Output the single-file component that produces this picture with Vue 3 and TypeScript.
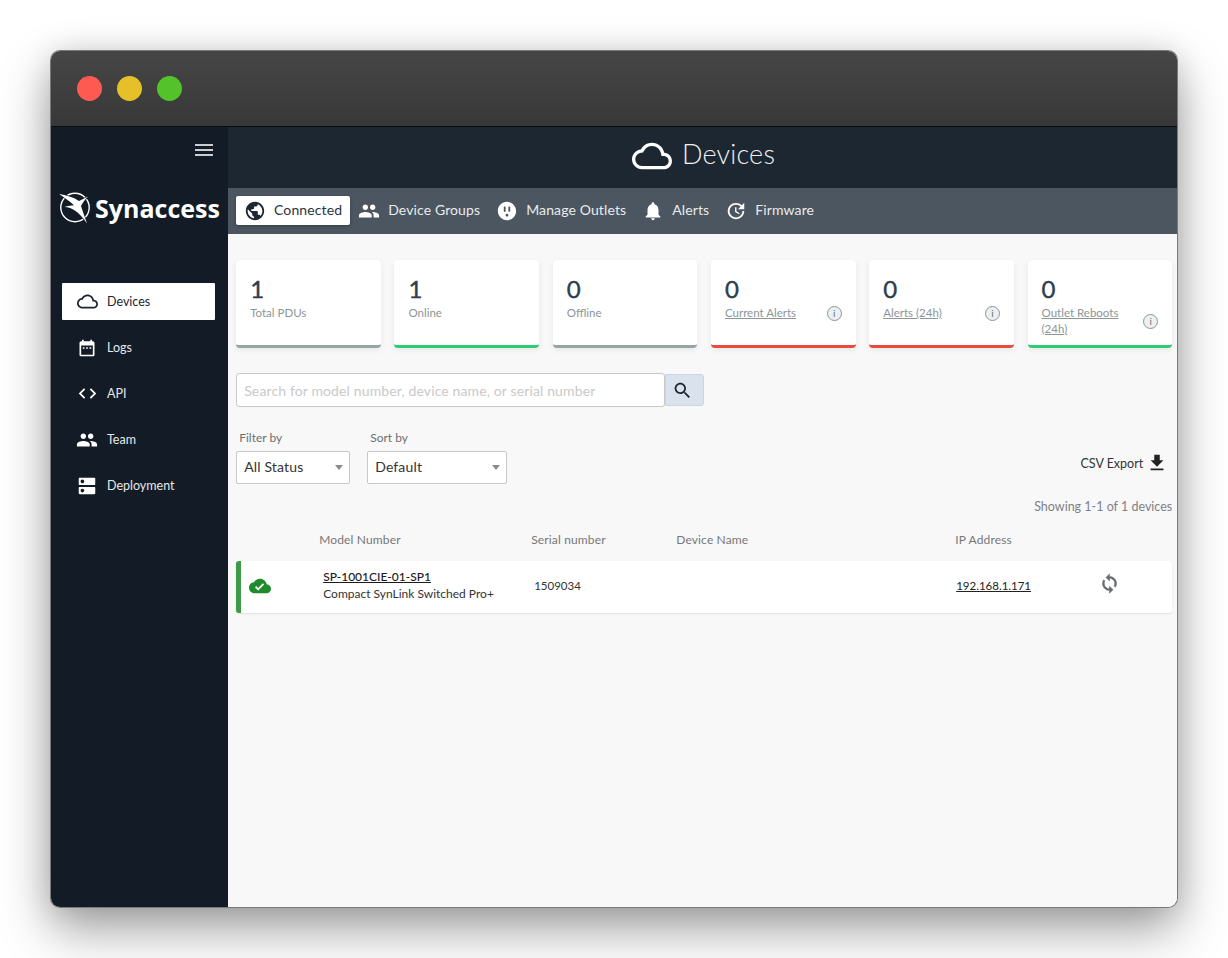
<script setup lang="ts">
interface Stat {
  value: number
  label: string
  tone: string
  link?: boolean
  info?: boolean
}

const icons = {
  menu: 'M3 18h18v-2H3v2zm0-5h18v-2H3v2zm0-7v2h18V6H3z',
  cloud: 'M19.35 10.04C18.67 6.59 15.64 4 12 4 9.11 4 6.6 5.64 5.35 8.04 2.34 8.36 0 10.91 0 14c0 3.31 2.69 6 6 6h13c2.76 0 5-2.24 5-5 0-2.64-2.05-4.78-4.65-4.96zM19 18H6c-2.21 0-4-1.79-4-4 0-2.05 1.53-3.76 3.56-3.97l1.07-.11.5-.95C8.08 7.14 9.94 6 12 6c2.62 0 4.88 1.86 5.39 4.43l.3 1.5 1.53.11c1.56.1 2.78 1.41 2.78 2.96 0 1.65-1.35 3-3 3z',
  calendar: 'M19 4h-1V2h-2v2H8V2H6v2H5c-1.1 0-2 .9-2 2v14c0 1.1.9 2 2 2h14c1.1 0 2-.9 2-2V6c0-1.1-.9-2-2-2zm0 16H5V9h14v11zM7 11h2v2H7v-2zm4 0h2v2h-2v-2zm4 0h2v2h-2v-2z',
  code: 'M9.4 16.6L4.8 12l4.6-4.6L8 6l-6 6 6 6 1.4-1.4zm5.2 0l4.6-4.6-4.6-4.6L16 6l6 6-6 6-1.4-1.4z',
  people: 'M16 11c1.66 0 2.99-1.34 2.99-3S17.66 5 16 5c-1.66 0-3 1.34-3 3s1.34 3 3 3zm-8 0c1.66 0 2.99-1.34 2.99-3S9.66 5 8 5C6.34 5 5 6.34 5 8s1.34 3 3 3zm0 2c-2.33 0-7 1.17-7 3.5V19h14v-2.5c0-2.33-4.67-3.5-7-3.5zm8 0c-.29 0-.62.02-.97.05 1.16.84 1.97 1.97 1.97 3.45V19h6v-2.5c0-2.33-4.67-3.5-7-3.5z',
  dns: 'M20 13H4c-.55 0-1 .45-1 1v6c0 .55.45 1 1 1h16c.55 0 1-.45 1-1v-6c0-.55-.45-1-1-1zM7 19c-1.1 0-2-.9-2-2s.9-2 2-2 2 .9 2 2-.9 2-2 2zM20 3H4c-.55 0-1 .45-1 1v6c0 .55.45 1 1 1h16c.55 0 1-.45 1-1V4c0-.55-.45-1-1-1zM7 9c-1.1 0-2-.9-2-2s.9-2 2-2 2 .9 2 2-.9 2-2 2z',
  globe: 'M12 2C6.48 2 2 6.48 2 12s4.48 10 10 10 10-4.48 10-10S17.52 2 12 2zm-1 17.93c-3.95-.49-7-3.85-7-7.93 0-.62.08-1.21.21-1.79L9 15v1c0 1.1.9 2 2 2v1.93zm6.9-2.54c-.26-.81-1-1.39-1.9-1.39h-1v-3c0-.55-.45-1-1-1H8v-2h2c.55 0 1-.45 1-1V7h2c1.1 0 2-.9 2-2v-.41c2.93 1.19 5 4.06 5 7.41 0 2.08-.8 3.97-2.1 5.39z',
  outlet: 'M12 2C6.48 2 2 6.48 2 12s4.48 10 10 10 10-4.48 10-10S17.52 2 12 2zM9.5 13c-.55 0-1-.45-1-1V8c0-.55.45-1 1-1s1 .45 1 1v4c0 .55-.45 1-1 1zm2.5 5c-.83 0-1.5-.67-1.5-1.5S11.17 15 12 15s1.5.67 1.5 1.5S12.83 18 12 18zm3.5-6c0 .55-.45 1-1 1s-1-.45-1-1V8c0-.55.45-1 1-1s1 .45 1 1v4z',
  bell: 'M12 22c1.1 0 2-.9 2-2h-4c0 1.1.89 2 2 2zm6-6v-5c0-3.07-1.64-5.64-4.5-6.32V4c0-.83-.67-1.5-1.5-1.5s-1.5.67-1.5 1.5v.68C7.63 5.36 6 7.92 6 11v5l-2 2v1h16v-1l-2-2z',
  update: 'M21 10.12h-6.78l2.74-2.82c-2.73-2.7-7.15-2.8-9.88-.1-2.73 2.71-2.73 7.08 0 9.79s7.15 2.71 9.88 0C18.32 15.65 19 14.08 19 12.1h2c0 1.98-.88 4.55-2.64 6.29-3.51 3.48-9.21 3.48-12.72 0-3.5-3.47-3.53-9.11-.02-12.58s9.14-3.47 12.65 0L21 3v7.12zM12.5 8v4.25l3.5 2.08-.72 1.21L11 13V8h1.5z',
  search: 'M15.5 14h-.79l-.28-.27C15.41 12.59 16 11.11 16 9.5 16 5.91 13.09 3 9.5 3S3 5.91 3 9.5 5.91 16 9.5 16c1.61 0 3.09-.59 4.23-1.57l.27.28v.79l5 4.99L20.49 19l-4.99-5zm-6 0C7.01 14 5 11.99 5 9.5S7.01 5 9.5 5 14 7.01 14 9.5 11.99 14 9.5 14z',
  download: 'M19 9h-4V3H9v6H5l7 7 7-7zM5 18v2h14v-2H5z',
  done: 'M19.35 10.04C18.67 6.59 15.64 4 12 4 9.11 4 6.6 5.64 5.35 8.04 2.34 8.36 0 10.91 0 14c0 3.31 2.69 6 6 6h13c2.76 0 5-2.24 5-5 0-2.64-2.05-4.78-4.65-4.96zM10 17l-3.5-3.5 1.41-1.41L10 14.17 15.18 9l1.41 1.41L10 17z',
  sync: 'M12 4V1L8 5l4 4V6c3.31 0 6 2.69 6 6 0 1.01-.25 1.97-.7 2.8l1.46 1.46C19.54 15.03 20 13.57 20 12c0-4.42-3.58-8-8-8zm0 14c-3.31 0-6-2.69-6-6 0-1.01.25-1.97.7-2.8L5.24 7.74C4.46 8.97 4 10.43 4 12c0 4.42 3.58 8 8 8v3l4-4-4-4v3z'
}

const sideItems = [
  { label: 'Devices', icon: icons.cloud, size: 21, active: true },
  { label: 'Logs', icon: icons.calendar, size: 20 },
  { label: 'API', icon: icons.code, size: 21 },
  { label: 'Team', icon: icons.people, size: 22 },
  { label: 'Deployment', icon: icons.dns, size: 22 }
]

const tabs = [
  { label: 'Connected', icon: icons.globe, active: true },
  { label: 'Device Groups', icon: icons.people },
  { label: 'Manage Outlets', icon: icons.outlet },
  { label: 'Alerts', icon: icons.bell },
  { label: 'Firmware', icon: icons.update }
]

const stats: Stat[] = [
  { value: 1, label: 'Total PDUs', tone: 'grey' },
  { value: 1, label: 'Online', tone: 'green' },
  { value: 0, label: 'Offline', tone: 'grey' },
  { value: 0, label: 'Current Alerts', tone: 'red', link: true, info: true },
  { value: 0, label: 'Alerts (24h)', tone: 'red', link: true, info: true },
  { value: 0, label: 'Outlet Reboots (24h)', tone: 'green', link: true, info: true }
]
</script>

<template>
  <div class="stage">
    <div class="window">
      <div class="titlebar">
        <span class="dot red"></span>
        <span class="dot yellow"></span>
        <span class="dot lime"></span>
      </div>
      <div class="app">
        <aside class="sidebar">
          <button class="burger" aria-label="Menu">
            <svg viewBox="0 0 24 24" width="24" height="24"><path :d="icons.menu" /></svg>
          </button>
          <div class="logo">
            <svg class="logo-mark" viewBox="0 0 34 32" width="34" height="32">
              <circle class="ring" cx="17" cy="15.5" r="14.2" />
              <path class="bolt" d="M1 2C8 3 15 5 21 9L30 4.5C26.5 8 24.5 11 23 14C25 20 27 26 29 31.5C25 25.5 21 21 16 18C13 16.2 10 15 6.5 15C10 14 13 13.2 16 13.2C11 9 6 5 1 2z" />
            </svg>
            <span class="logo-text">Synaccess</span>
          </div>
          <nav class="side-nav">
            <a v-for="item in sideItems" :key="item.label" class="side-item" :class="{ active: item.active }">
              <span class="side-icon">
                <svg viewBox="0 0 24 24" :width="item.size" :height="item.size"><path :d="item.icon" /></svg>
              </span>
              <span>{{ item.label }}</span>
            </a>
          </nav>
        </aside>

        <main class="main">
          <header class="page-head">
            <svg viewBox="0 0 24 24" width="40" height="40"><path :d="icons.cloud" /></svg>
            <h1>Devices</h1>
          </header>
          <div class="tabs">
            <a v-for="tab in tabs" :key="tab.label" class="tab" :class="{ active: tab.active }">
              <svg viewBox="0 0 24 24" width="22" height="22"><path :d="tab.icon" /></svg>
              <span>{{ tab.label }}</span>
            </a>
          </div>

          <section class="content">
            <div class="stats">
              <div v-for="stat in stats" :key="stat.label" class="stat" :class="stat.tone">
                <div class="stat-value">{{ stat.value }}</div>
                <div class="stat-row">
                  <span class="stat-label" :class="{ link: stat.link }">{{ stat.label }}</span>
                  <span v-if="stat.info" class="info">i</span>
                </div>
              </div>
            </div>

            <div class="search">
              <div class="search-input">Search for model number, device name, or serial number</div>
              <button class="search-btn" aria-label="Search">
                <svg viewBox="0 0 24 24" width="21" height="21"><path :d="icons.search" /></svg>
              </button>
            </div>

            <div class="filters">
              <div class="field">
                <label>Filter by</label>
                <div class="select status">All Status<i class="caret"></i></div>
              </div>
              <div class="field">
                <label>Sort by</label>
                <div class="select sort">Default<i class="caret"></i></div>
              </div>
              <a class="export">
                CSV Export
                <svg viewBox="0 0 24 24" width="22" height="22"><path :d="icons.download" /></svg>
              </a>
            </div>

            <div class="showing">Showing 1-1 of 1 devices</div>

            <div class="cols">
              <span></span>
              <span>Model Number</span>
              <span>Serial number</span>
              <span>Device Name</span>
              <span>IP Address</span>
            </div>
            <div class="device">
              <svg class="status-icon" viewBox="0 0 24 24" width="22" height="22"><path :d="icons.done" /></svg>
              <div class="model">
                <a>SP-1001CIE-01-SP1</a>
                <span>Compact SynLink Switched Pro+</span>
              </div>
              <div class="serial">1509034</div>
              <div></div>
              <a class="ip">192.168.1.171</a>
              <svg class="sync" viewBox="0 0 24 24" width="21" height="21"><path :d="icons.sync" /></svg>
            </div>
          </section>
        </main>
      </div>
    </div>
  </div>
</template>

<style>
html, body { margin: 0; background: #fff; }
</style>

<style scoped>
* { box-sizing: border-box; }

.stage {
  width: 1228px;
  height: 958px;
  padding: 51px;
  overflow: hidden;
  font-family: Lato, "Open Sans", sans-serif;
}

.window {
  width: 1126px;
  height: 856px;
  border-radius: 9px;
  overflow: hidden;
  display: flex;
  flex-direction: column;
  box-shadow: 0 0 0 1px #77797b, 0 22px 50px rgba(0, 0, 0, 0.38), 0 0 30px rgba(0, 0, 0, 0.12);
}

.titlebar {
  height: 76px;
  flex: none;
  display: flex;
  align-items: center;
  gap: 15px;
  padding-left: 26px;
  background: linear-gradient(#464646, #383838);
  border-bottom: 1px solid #0b0b0b;
}

.dot {
  width: 25px;
  height: 25px;
  border-radius: 50%;
}
.dot.red { background: #ff5a52; }
.dot.yellow { background: #e6c029; }
.dot.lime { background: #53c22b; }

.app {
  flex: 1;
  display: flex;
  min-height: 0;
}

.sidebar {
  width: 177px;
  flex: none;
  background: #131c26;
  color: #fff;
  display: flex;
  flex-direction: column;
}

.burger {
  align-self: flex-end;
  margin: 11px 12px 0 0;
  padding: 0;
  border: 0;
  background: none;
  height: 24px;
}
.burger svg { fill: #c9ccd0; display: block; }

.logo {
  margin: 29px 0 0 7px;
  display: flex;
  align-items: center;
  gap: 3px;
  height: 34px;
}
.logo-mark { flex: none; margin-top: -1px; }
.ring { fill: none; stroke: #fff; stroke-width: 1.4; }
.bolt { fill: #fff; stroke: #131c26; stroke-width: 1.2; paint-order: stroke; }
.logo-text {
  font-family: "Open Sans", sans-serif;
  font-weight: 700;
  font-size: 25px;
  line-height: 34px;
}

.side-nav {
  margin: 58px 13px 0 11px;
  display: flex;
  flex-direction: column;
  gap: 9px;
}

.side-item {
  height: 37px;
  display: flex;
  align-items: center;
  gap: 9px;
  padding-left: 14px;
  font-size: 12.5px;
  color: #e6e8ea;
  border-radius: 1px;
}
.side-icon {
  width: 22px;
  height: 22px;
  flex: none;
  display: flex;
  align-items: center;
  justify-content: center;
}
.side-item svg { fill: #fff; }
.side-item.active { background: #fff; color: #1b2631; }
.side-item.active svg { fill: #1b2631; }

.main {
  flex: 1;
  min-width: 0;
  display: flex;
  flex-direction: column;
  background: #f8f8f8;
}

.page-head {
  height: 61px;
  flex: none;
  padding: 0 0 8px 2px;
  background: #1c2731;
  color: #fff;
  display: flex;
  align-items: center;
  justify-content: center;
  gap: 10px;
}
.page-head svg { fill: #fff; margin-top: 4px; }
.page-head h1 {
  margin: 0;
  font-size: 27px;
  font-weight: 300;
  letter-spacing: 0.2px;
  color: #eef0f1;
}

.tabs {
  height: 46px;
  flex: none;
  padding: 0 0 1px 8px;
  background: #4b5660;
  display: flex;
  align-items: center;
}
.tab {
  height: 29px;
  display: flex;
  align-items: center;
  gap: 8px;
  padding: 0 8px;
  font-size: 14px;
  letter-spacing: 0.12px;
  color: #e9ebed;
  border-radius: 2px;
}
.tab span { margin-top: -2px; }
.tab svg { fill: #fff; flex: none; }
.tab.active {
  background: #fff;
  color: #2a343e;
  box-shadow: 0 1px 3px rgba(0, 0, 0, 0.3);
}
.tab.active svg { fill: #1c2731; }

.content {
  flex: 1;
  padding: 26px 4.8px 0 8.2px;
}

.stats {
  display: grid;
  grid-template-columns: repeat(6, 1fr);
  gap: 13.6px;
}

.stat {
  height: 88px;
  padding: 15px 14px 0;
  background: #fff;
  border-radius: 4px;
  border-bottom: 3px solid #95a5a6;
  box-shadow: 0 2px 6px rgba(0, 0, 0, 0.07);
}
.stat.green { border-bottom-color: #2ecc71; }
.stat.red { border-bottom-color: #e74c3c; }
.stat.grey { border-bottom-color: #95a5a6; }

.stat-value {
  font-size: 24px;
  line-height: 28px;
  font-weight: 400;
  -webkit-text-stroke: 0.4px #2c3e50;
  color: #2c3e50;
}

.stat-row {
  display: flex;
  align-items: center;
  justify-content: space-between;
  gap: 8px;
  margin-top: 2px;
}

.stat-label {
  font-size: 11.5px;
  line-height: 16px;
  color: #8b9698;
}
.stat-label.link { text-decoration: underline; }

.info {
  flex: none;
  width: 15px;
  height: 15px;
  border: 1px solid #8b9698;
  border-radius: 50%;
  background: #ecf0f1;
  color: #6b7577;
  font-size: 10px;
  line-height: 13px;
  text-align: center;
}

.search {
  display: flex;
  margin-top: 25px;
  width: 468px;
}
.search-input {
  flex: 1;
  height: 34px;
  padding: 0 7px;
  background: #fff;
  border: 1px solid #c8c8c8;
  border-radius: 3px;
  font-size: 14px;
  letter-spacing: 0.13px;
  line-height: 33px;
  color: #c9c9c9;
}
.search-btn {
  width: 39px;
  height: 32px;
  margin-top: 1px;
  padding: 0 4px 0 0;
  border: 1px solid #ccd6e2;
  border-radius: 0 3px 3px 0;
  background: #d9e2ed;
  display: flex;
  align-items: center;
  justify-content: center;
}
.search-btn svg { fill: #1c2731; }

.filters {
  display: flex;
  align-items: flex-end;
  gap: 17px;
  margin-top: 23px;
}
.field label {
  display: block;
  padding-left: 3px;
  font-size: 12px;
  line-height: 16px;
  color: #6f6f6f;
  margin-bottom: 5px;
}
.select {
  position: relative;
  height: 33px;
  padding-left: 7px;
  background: #fff;
  border: 1px solid #c8c8c8;
  border-radius: 2px;
  font-size: 14px;
  letter-spacing: 0.15px;
  line-height: 29px;
  color: #333;
}
.select.status { width: 114px; }
.select.sort { width: 140px; }
.caret {
  position: absolute;
  right: 6px;
  top: 13px;
  width: 0;
  height: 0;
  border-left: 4px solid transparent;
  border-right: 4px solid transparent;
  border-top: 5px solid #8a8a8a;
}

.export {
  margin-left: auto;
  margin-right: 4px;
  margin-bottom: 10px;
  display: flex;
  align-items: center;
  gap: 3px;
  font-size: 12.5px;
  color: #333;
}
.export svg { fill: #222; }

.showing {
  margin-top: 15px;
  text-align: right;
  font-size: 12.5px;
  line-height: 16px;
  color: #7e8088;
}

.cols {
  display: grid;
  grid-template-columns: 83px 212px 145px 279px 1fr;
  margin-top: 17px;
  font-size: 12px;
  letter-spacing: 0.15px;
  line-height: 16px;
  color: #777;
}

.device {
  height: 52px;
  margin-top: 13px;
  display: grid;
  grid-template-columns: 82px 211px 142px 280px 145px 1fr;
  align-items: center;
  background: #fff;
  border-left: 5px solid #3d9a46;
  border-radius: 3px;
  box-shadow: 0 1px 2px rgba(0, 0, 0, 0.1);
  font-size: 11.5px;
  color: #333;
}
.status-icon { fill: #1e8c2d; margin: -2px 0 0 8px; }
.model {
  display: flex;
  flex-direction: column;
  gap: 1px;
  line-height: 16px;
  padding-bottom: 4px;
}
.model a {
  font-size: 12px;
  color: #1b1b1b;
  font-weight: 500;
  text-decoration: underline;
}
.model span { font-size: 12px; }
.serial, .ip { margin-bottom: 3px; }
.ip { color: #222; text-decoration: underline; }
.sync { fill: #666c72; stroke: #666c72; stroke-width: 0.7; margin: -7px 0 0 -2px; }
</style>
